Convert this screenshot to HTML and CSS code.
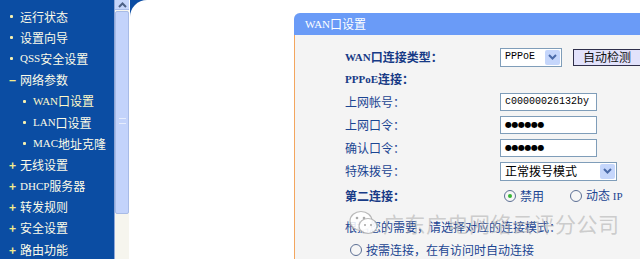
FILE: index.html
```html
<!DOCTYPE html>
<html lang="zh-CN">
<head>
<meta charset="utf-8">
<link rel="stylesheet" href="styles.css">
</head>
<body>
<div class="page">
  <nav class="sidebar">
    <ul class="menu">
      <li class="item"><span class="dot"></span>运行状态</li>
      <li class="item"><span class="dot"></span>设置向导</li>
      <li class="item"><span class="dot"></span><span class="lat">QSS</span>安全设置</li>
      <li class="item"><span class="sign">−</span>网络参数</li>
      <li class="item sub active"><span class="dot"></span><span class="lat">WAN</span>口设置</li>
      <li class="item sub"><span class="dot"></span><span class="lat">LAN</span>口设置</li>
      <li class="item sub"><span class="dot"></span><span class="lat">MAC</span>地址克隆</li>
      <li class="item"><span class="sign">+</span>无线设置</li>
      <li class="item"><span class="sign">+</span><span class="lat">DHCP</span>服务器</li>
      <li class="item"><span class="sign">+</span>转发规则</li>
      <li class="item"><span class="sign">+</span>安全设置</li>
      <li class="item"><span class="sign">+</span>路由功能</li>
    </ul>
  </nav>
  <div class="scrollbar">
    <div class="sb-up"><svg width="13" height="8" viewBox="0 0 13 8"><path d="M3 6 L6.5 2.5 L10 6" fill="none" stroke="#4d6185" stroke-width="2"/></svg></div>
    <div class="sb-thumb"><span class="grip"></span></div>
    <div class="sb-track"></div>
  </div>
  <main class="main">
    <div class="frame">
      <section class="panel">
        <header class="panel-head"><span class="lat">WAN</span>口设置</header>
        <div class="panel-body">
          <div class="form">
            <div class="lbl bold r1"><span class="lat">WAN</span>口连接类型：</div>
            <div class="ctl r1">
              <div class="select sel-short"><span class="mono">PPPoE</span><span class="arrow"><svg width="9" height="6" viewBox="0 0 9 6"><path d="M1 1 L4.5 4.5 L8 1" fill="none" stroke="#4a6aa8" stroke-width="2"/></svg></span></div>
              <div class="btn">自动检测</div>
            </div>
            <div class="lbl bold r2"><span class="lat">PPPoE</span>连接：</div>
            <div class="ctl r2"></div>
            <div class="lbl r3">上网帐号：</div>
            <div class="ctl r3"><div class="input mono">c00000026132by</div></div>
            <div class="lbl r3">上网口令：</div>
            <div class="ctl r3"><div class="input dots">●●●●●●</div></div>
            <div class="lbl r3">确认口令：</div>
            <div class="ctl r3"><div class="input dots">●●●●●●</div></div>
            <div class="lbl r6">特殊拨号：</div>
            <div class="ctl r6">
              <div class="select sel-long"><span>正常拨号模式</span><span class="arrow"><svg width="9" height="6" viewBox="0 0 9 6"><path d="M1 1 L4.5 4.5 L8 1" fill="none" stroke="#4a6aa8" stroke-width="2"/></svg></span></div>
            </div>
            <div class="lbl bold r7">第二连接：</div>
            <div class="ctl r7 radios">
              <span class="radio checked"></span><span class="rtext">禁用</span>
              <span class="radio gap"></span><span class="rtext">动态 <span class="lat">IP</span></span>
            </div>
            <div class="full r8">根据您的需要，请选择对应的连接模式：</div>
            <div class="full r9 optrow"><span class="radio"></span><span class="rtext">按需连接，在有访问时自动连接</span></div>
          </div>
          <div class="watermark">
            <span class="wx"><svg width="30" height="28" viewBox="0 0 30 28"><ellipse cx="12" cy="12" rx="11" ry="9.5" fill="rgba(255,255,255,0.85)" stroke="rgba(170,170,170,0.8)" stroke-width="1.2"/><ellipse cx="19" cy="17" rx="9" ry="7.5" fill="rgba(255,255,255,0.9)" stroke="rgba(170,170,170,0.8)" stroke-width="1.2"/><circle cx="8" cy="9" r="1.3" fill="#aaa"/><circle cx="15" cy="9" r="1.3" fill="#aaa"/><circle cx="16" cy="16" r="1.1" fill="#aaa"/><circle cx="22" cy="16" r="1.1" fill="#aaa"/></svg></span>
            <span class="wtext">广东广电网络云评分公司</span>
          </div>
        </div>
      </section>
    </div>
  </main>
</div>
</body>
</html>
```

FILE: styles.css
```css
* { box-sizing: border-box; }
html, body { margin: 0; padding: 0; }
body {
  width: 640px;
  height: 259px;
  overflow: hidden;
  font-family: "Noto Sans CJK SC", "DejaVu Sans", sans-serif;
  font-size: 12px;
  background: #ffffff;
}
.lat { font-family: "Liberation Serif", serif; font-size: 11px; }
.mono { font-family: "Liberation Mono", monospace; font-size: 10px; }

.page { display: flex; height: 259px; }

/* sidebar */
.sidebar {
  width: 114px;
  flex: none;
  background: #0b4da3;
  color: #fcfbe8;
}
.menu { list-style: none; margin: 0; padding: 6px 0 0 0; }
.item {
  display: flex;
  align-items: center;
  height: 21.2px;
  padding-left: 9px;
  white-space: nowrap;
  line-height: 1;
}
.item .dot {
  width: 3px; height: 3px;
  border-radius: 1px;
  background: #f6f0b0;
  margin: 0 7px 0 1px;
  flex: none;
}
.item .sign {
  width: 10px;
  color: #f5ec8c;
  font-weight: bold;
  font-size: 12px;
  margin-right: 1px;
  flex: none;
}
.item.sub { padding-left: 22px; }
.item.active { color: #fff9c8; }

/* scrollbar */
.scrollbar {
  width: 16px;
  flex: none;
  display: flex;
  flex-direction: column;
  background: #f6f5ee;
  border-left: 1px solid #8fa7d8;
  border-right: 1px solid #ffffff;
}
.sb-up {
  height: 10px;
  background: #c6d6fb;
  border-bottom: 1px solid #a9bce8;
  display: flex;
  align-items: flex-end;
  justify-content: center;
  overflow: hidden;
}
.sb-thumb {
  height: 203px;
  background: #c3d3fb;
  border: 1px solid #a8bbe6;
  border-radius: 2px;
  margin-top: 1px;
  display: flex;
  align-items: center;
  justify-content: center;
}
.grip {
  width: 7px; height: 6px;
  border-top: 1px solid #e6edfd;
  border-bottom: 1px solid #e6edfd;
  margin-top: 16px;
}
.sb-track { flex: 1; }

/* main area */
.main {
  flex: 1;
  background: #0b4da3;
  min-width: 0;
}
.frame {
  height: 100%;
  background: #ffffff;
  border-top-left-radius: 17px;
  padding: 13px 0 0 164px;
}
.panel {
  background: #f4f4f4;
  height: 100%;
  border-top-left-radius: 6px;
  overflow: hidden;
  width: 360px;
}
.panel-head {
  height: 22px;
  background: #6a9bf7;
  color: #ffffff;
  display: flex;
  align-items: center;
  padding-left: 11px;
  line-height: 1;
}
.panel-body {
  position: relative;
  border-left: 1px solid #f3a65e;
  height: 240px;
  padding: 11px 0 0 50px;
}
.form {
  display: grid;
  grid-template-columns: 155px 1fr;
  color: #1b4592;
  line-height: 1;
}
.lbl, .ctl, .full { display: flex; align-items: center; white-space: nowrap; }
.bold { font-weight: bold; color: #173a86; }
.r1 { height: 22px; }
.r2 { height: 22px; }
.r3 { height: 23px; }
.r6 { height: 24px; }
.r7 { height: 25px; }
.r8 { grid-column: 1 / 3; height: 22px; margin-top: 8px; }
.r9 { grid-column: 1 / 3; height: 24px; padding-left: 5px; }

.select {
  height: 19px;
  background: #ffffff;
  border: 1px solid #7f9db9;
  display: flex;
  align-items: center;
  justify-content: space-between;
  padding: 0 1px 0 4px;
  color: #000;
}
.sel-short { width: 62px; }
.sel-long { width: 117px; font-size: 12px; }
.arrow {
  width: 15px; height: 15px;
  background: #c5d6fb;
  border-radius: 2px;
  display: flex; align-items: center; justify-content: center;
}
.btn {
  margin-left: 11px;
  width: 68px;
  height: 17px;
  background: #e2e2fb;
  border: 1px solid #2f2f4a;
  color: #111;
  display: flex; align-items: center; justify-content: center;
}
.input {
  width: 97px;
  height: 18px;
  background: #ffffff;
  border: 1px solid #7f9db9;
  display: flex; align-items: center;
  padding-left: 4px;
  color: #000;
}
.dots { font-size: 8px; letter-spacing: -0.5px; font-family: "DejaVu Sans", sans-serif; }

.radios { padding-left: 4px; }
.radio {
  width: 12px; height: 12px;
  border-radius: 50%;
  border: 1px solid #5c6f94;
  background: #f6f6f6;
  flex: none;
  position: relative;
  margin-right: 4px;
}
.radio.checked::after {
  content: "";
  position: absolute;
  left: 3px; top: 3px;
  width: 4px; height: 4px;
  border-radius: 50%;
  background: #35b535;
}
.radio.gap { margin-left: 26px; }
.rtext { color: #1b4592; }

.watermark {
  position: absolute;
  left: 54px;
  top: 174px;
  display: flex;
  align-items: center;
  pointer-events: none;
}
.wx { display: flex; }
.wtext {
  margin-left: 4px;
  font-size: 21px;
  color: rgba(170, 170, 170, 0.55);
  letter-spacing: 0.5px;
  line-height: 1;
}
```
